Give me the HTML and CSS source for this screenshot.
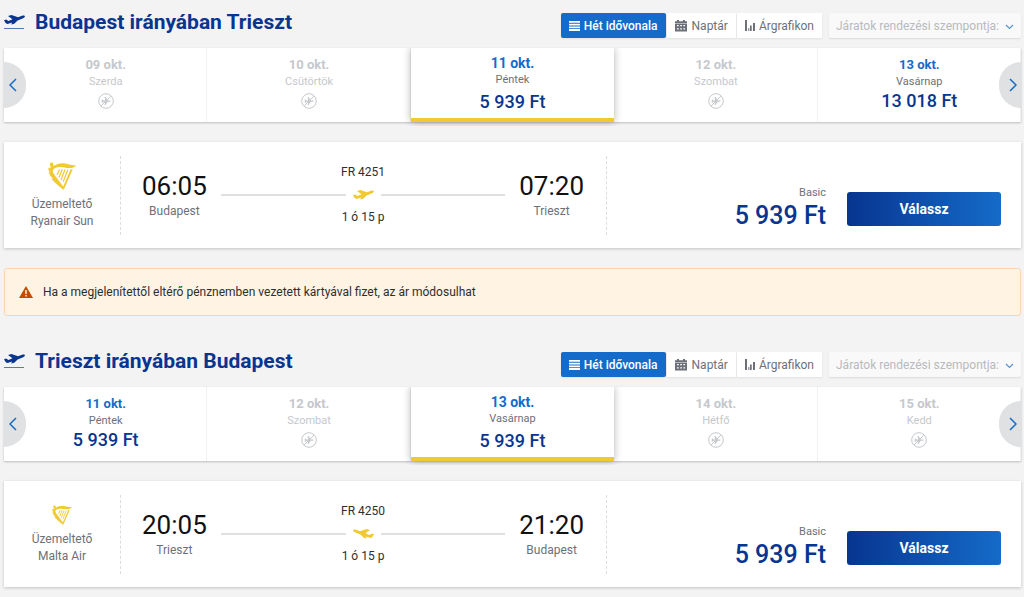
FILE: index.html
```
<!DOCTYPE html>
<html lang="hu">
<head>
  <meta charset="UTF-8">
  <meta name="viewport" content="width=device-width, initial-scale=1.0">
  <title>Járatválasztás</title>
  <link rel="stylesheet" href="styles.css">
</head>
<body>
  <!-- Shared icons -->
  <svg class="sprite" aria-hidden="true">
    <symbol id="plane" viewBox="0 0 21 10">
      <path d="M0 5.200 2 4.600l2.500 1.500 4-1.900L4 1l3.500-.9 6.500 2.200 4-1.600c1.400-.5 2.800-.3 2.900.5.1 1-1.100 1.700-2.300 2.200l-5 2.100-3.400 3.300-3 .7.900-2-3 1C3.500 9.100 2.300 9 1.600 8.100z"/>
    </symbol>
    <symbol id="no-flight" viewBox="0 0 16 16">
      <circle cx="8" cy="8" r="7.300" fill="none" stroke="currentColor"/>
      <path d="M3.200 12.800 12.800 3.200" stroke="currentColor"/>
      <path d="M3.500 6.500h1l1 1H7.300L6.500 4h1l2.200 3.500h2c1.200 0 1.200 1.200 0 1.200h-2L7.500 12h-1l.8-3.300H5.500l-1 1h-1L4 8z" fill="currentColor"/>
    </symbol>
    <symbol id="harp" viewBox="0 0 28 28">
      <path d="M2.200 1.200C3.300.2 5 .5 5.300 2c.2.900-.1 1.500-.5 2C9.500 2 12.500.6 17 1.400c4.300.8 6.800 2.300 11 1.500-1.600 2.600-5 3.600-9 3-4.700-.8-8.500-1.500-12.500.5-2.200 1.200-2 3.100-.7 5.300l9.700 13.200-.3 2.900C11.500 24 5 19.800 3.400 16.500l1.500.3C2.700 14.500 1 12.200.6 9.800l1.500.7C.8 8.600 0 7 .4 5.400l1.600 1C2.200 5.500 2.500 5 3 4.500 1.900 4 1.500 2.500 2.200 1.200z"/>
      <path d="M22.500 7.500 24.800 7 15.600 28l-.8-2.600z"/>
      <path d="M11.500 7.500 9 13M14.200 7.200 11 15.500M17 7.500l-4 10.500M19.800 7.800l-4.600 12" stroke="currentColor" stroke-width="1.200" fill="none"/>
    </symbol>
    <symbol id="chevron" viewBox="0 0 8 14">
      <path d="M7 1 1 7l6 6" fill="none" stroke="currentColor" stroke-width="1.500"/>
    </symbol>
    <symbol id="rows" viewBox="0 0 11 10">
      <path d="M0 0h11v1.800H0zM0 2.700h11v1.800H0zM0 5.400h11v1.800H0zM0 8.100h11v1.800H0z"/>
    </symbol>
    <symbol id="calendar" viewBox="0 0 12 12">
      <path fill-rule="evenodd" d="M2 0h2v1.200h4V0h2v1.200h2V3H0V1.200h2zM0 3.600h12V11.500H0zM2 5v1.200h1.700V5zm3.200 0v1.200h1.700V5zm3.200 0v1.200h1.700V5zM2 8.200v1.200h1.700V8.200zm3.200 0v1.200h1.700V8.200zm3.200 0v1.200h1.700V8.200z"/>
    </symbol>
    <symbol id="bars" viewBox="0 0 10 11">
      <path d="M0 0h2v11H0zM3.300 8h1v3h-1zM5 5.500h1.700V11H5zM8 3h2v8H8z"/>
    </symbol>
  </svg>

  <main class="flights">
    <section class="journey">
      <header class="journey-header">
        <h1>
          <svg class="takeoff" viewBox="0 0 21 15" aria-hidden="true"><use href="#plane" width="21" height="10"/><path d="M0 13.500h20" stroke="#5577b8"/></svg>
          Budapest irányában Trieszt
        </h1>
        <div class="tools">
          <div class="views">
            <button class="view selected"><svg class="icon-rows"><use href="#rows"/></svg>Hét idővonala</button>
            <button class="view"><svg class="icon-calendar"><use href="#calendar"/></svg>Naptár</button>
            <button class="view"><svg class="icon-bars"><use href="#bars"/></svg>Árgrafikon</button>
          </div>
          <div class="sort">
            <select disabled aria-label="Rendezés">
              <option>Járatok rendezési szempontja:</option>
            </select>
            <svg viewBox="0 0 9 6"><path d="M1 1l3.500 3.500L8 1" fill="none" stroke="currentColor" stroke-width="1.200"/></svg>
          </div>
        </div>
      </header>

      <div class="carousel">
        <button class="arrow prev" aria-label="Előző"><svg><use href="#chevron"/></svg></button>
        <button class="day" disabled>
          <span class="date">09 okt.</span>
          <span class="weekday">Szerda</span>
          <svg class="no-flight"><use href="#no-flight"/></svg>
        </button>
        <button class="day" disabled>
          <span class="date">10 okt.</span>
          <span class="weekday">Csütörtök</span>
          <svg class="no-flight"><use href="#no-flight"/></svg>
        </button>
        <button class="day active">
          <span class="date">11 okt.</span>
          <span class="weekday">Péntek</span>
          <span class="fare">5 939 Ft</span>
        </button>
        <button class="day" disabled>
          <span class="date">12 okt.</span>
          <span class="weekday">Szombat</span>
          <svg class="no-flight"><use href="#no-flight"/></svg>
        </button>
        <button class="day">
          <span class="date">13 okt.</span>
          <span class="weekday">Vasárnap</span>
          <span class="fare">13 018 Ft</span>
        </button>
        <button class="arrow next" aria-label="Következő"><svg><use href="#chevron"/></svg></button>
      </div>

      <article class="card">
        <div class="operator">
          <svg class="harp harp-large"><use href="#harp"/></svg>
          <span>Üzemeltető</span>
          <span>Ryanair Sun</span>
        </div>
        <div class="route">
          <div class="stop">
            <span class="time">06:05</span>
            <span class="city">Budapest</span>
          </div>
          <div class="leg">
            <span>FR 4251</span>
            <div class="track"><svg><use href="#plane"/></svg></div>
            <span>1 ó 15 p</span>
          </div>
          <div class="stop">
            <span class="time">07:20</span>
            <span class="city">Trieszt</span>
          </div>
        </div>
        <div class="offer">
          <div class="price">
            <span class="plan">Basic</span>
            <span class="amount">5 939 Ft</span>
          </div>
          <button class="select-button">Válassz</button>
        </div>
      </article>
    </section>

    <div class="notice">
      <svg viewBox="0 0 14 12" aria-hidden="true">
        <path d="M7 0 14 12H0z" fill="#c54b00"/>
        <path d="M7 4v4M7 9v1.500" stroke="#fff4e4" stroke-width="1.500"/>
      </svg>
      <p>Ha a megjelenítettől eltérő pénznemben vezetett kártyával fizet, az ár módosulhat</p>
    </div>

    <section class="journey">
      <header class="journey-header">
        <h1>
          <svg class="takeoff" viewBox="0 0 21 15" aria-hidden="true"><use href="#plane" width="21" height="10"/><path d="M0 13.500h20" stroke="#5577b8"/></svg>
          Trieszt irányában Budapest
        </h1>
        <div class="tools">
          <div class="views">
            <button class="view selected"><svg class="icon-rows"><use href="#rows"/></svg>Hét idővonala</button>
            <button class="view"><svg class="icon-calendar"><use href="#calendar"/></svg>Naptár</button>
            <button class="view"><svg class="icon-bars"><use href="#bars"/></svg>Árgrafikon</button>
          </div>
          <div class="sort">
            <select disabled aria-label="Rendezés">
              <option>Járatok rendezési szempontja:</option>
            </select>
            <svg viewBox="0 0 9 6"><path d="M1 1l3.500 3.500L8 1" fill="none" stroke="currentColor" stroke-width="1.200"/></svg>
          </div>
        </div>
      </header>

      <div class="carousel">
        <button class="arrow prev" aria-label="Előző"><svg><use href="#chevron"/></svg></button>
        <button class="day">
          <span class="date">11 okt.</span>
          <span class="weekday">Péntek</span>
          <span class="fare">5 939 Ft</span>
        </button>
        <button class="day" disabled>
          <span class="date">12 okt.</span>
          <span class="weekday">Szombat</span>
          <svg class="no-flight"><use href="#no-flight"/></svg>
        </button>
        <button class="day active">
          <span class="date">13 okt.</span>
          <span class="weekday">Vasárnap</span>
          <span class="fare">5 939 Ft</span>
        </button>
        <button class="day" disabled>
          <span class="date">14 okt.</span>
          <span class="weekday">Hétfő</span>
          <svg class="no-flight"><use href="#no-flight"/></svg>
        </button>
        <button class="day" disabled>
          <span class="date">15 okt.</span>
          <span class="weekday">Kedd</span>
          <svg class="no-flight"><use href="#no-flight"/></svg>
        </button>
        <button class="arrow next" aria-label="Következő"><svg><use href="#chevron"/></svg></button>
      </div>

      <article class="card">
        <div class="operator">
          <svg class="harp"><use href="#harp"/></svg>
          <span>Üzemeltető</span>
          <span>Malta Air</span>
        </div>
        <div class="route">
          <div class="stop">
            <span class="time">20:05</span>
            <span class="city">Trieszt</span>
          </div>
          <div class="leg">
            <span>FR 4250</span>
            <div class="track inbound"><svg><use href="#plane"/></svg></div>
            <span>1 ó 15 p</span>
          </div>
          <div class="stop">
            <span class="time">21:20</span>
            <span class="city">Budapest</span>
          </div>
        </div>
        <div class="offer">
          <div class="price">
            <span class="plan">Basic</span>
            <span class="amount">5 939 Ft</span>
          </div>
          <button class="select-button">Válassz</button>
        </div>
      </article>
    </section>
  </main>
</body>
</html>
```
FILE: styles.css
```
* {
  box-sizing: border-box;
}
body {
  margin: 0;
  font-family: Roboto, "Liberation Sans", sans-serif;
  font-size: 12px;
  color: #2e2e2e;
  background-color: #f3f3f3;
}
button,
select {
  font-family: inherit;
  font-size: 12px;
  border: none;
  margin: 0;
  cursor: pointer;
}
svg {
  fill: currentColor;
  flex-shrink: 0;
}
.sprite {
  display: none;
}
.flights {
  padding: 0 3px 10px 4px;
}

/* Title and view switch */
.journey-header {
  display: flex;
  justify-content: space-between;
  align-items: flex-start;
  padding: 8px 0 10px;
}
.journey-header h1 {
  display: flex;
  align-items: center;
  gap: 10px;
  margin: 0;
  font-size: 21px;
  line-height: 28px;
  font-weight: 700;
  color: #073590;
}
.takeoff {
  width: 21px;
  height: 15px;
}
.tools {
  display: flex;
  gap: 7px;
  padding-top: 5px;
}
.views {
  display: flex;
  gap: 1px;
}
.view {
  display: flex;
  align-items: center;
  gap: 4px;
  height: 25px;
  padding: 0 8px;
  color: #6e7079;
  background: #fff;
  box-shadow: 0 1px 2px rgba(0, 0, 0, 0.08);
}
.view.selected {
  font-weight: 500;
  color: #fff;
  background: #156bc9;
  border-radius: 2px;
}
.icon-rows {
  width: 11px;
  height: 10px;
}
.icon-calendar {
  width: 12px;
  height: 12px;
  margin-right: 1px;
}
.icon-bars {
  width: 10px;
  height: 11px;
}
.sort {
  position: relative;
  color: #156bc9;
}
.sort select {
  appearance: none;
  width: 192px;
  height: 25px;
  padding: 0 7px;
  color: #b8babd;
  opacity: 1;
  background: #f9f9f9;
  border-radius: 2px;
  box-shadow: 0 1px 2px rgba(0, 0, 0, 0.1);
}
.sort svg {
  position: absolute;
  right: 7px;
  top: 11px;
  width: 9px;
  height: 6px;
  opacity: 0.7;
}

/* Day carousel */
.carousel {
  position: relative;
  display: grid;
  grid-template-columns: repeat(5, 1fr);
  background: #fff;
  box-shadow: 0 1px 2px rgba(0, 0, 0, 0.22);
}
.day {
  display: flex;
  flex-direction: column;
  align-items: center;
  height: 74px;
  padding: 9px 0 0;
  color: #6e7079;
  background: #fff;
  box-shadow: inset -1px 0 #f1f1f1;
}
.day:disabled {
  color: #c5c8cc;
}
.date {
  font-size: 13px;
  line-height: 16px;
  font-weight: 700;
  color: #156bc9;
}
.weekday {
  font-size: 11px;
  line-height: 17px;
}
.fare {
  font-size: 18px;
  line-height: 22px;
  font-weight: 500;
  color: #073590;
}
.day:disabled .date {
  color: inherit;
}
.day.active {
  position: relative;
  padding-top: 7px;
  border-bottom: 4px solid #f1c933;
  box-shadow: 0 0 8px rgba(0, 0, 0, 0.3);
  clip-path: inset(0 -12px -4px);
}
.active .date {
  font-size: 14px;
}
.active .fare {
  line-height: 28px;
}
.no-flight {
  width: 16px;
  height: 16px;
  margin-top: 3px;
}
.arrow {
  position: absolute;
  top: 14px;
  z-index: 1;
  display: flex;
  align-items: center;
  justify-content: center;
  width: 22px;
  height: 46px;
  padding: 0;
  color: #156bc9;
  background: #e0e1e3;
}
.arrow svg {
  width: 8px;
  height: 14px;
}
.prev {
  left: 0;
  padding-right: 5px;
  border-radius: 0 23px 23px 0;
}
.next {
  right: 0;
  padding-left: 5px;
  border-radius: 23px 0 0 23px;
}
.next svg {
  transform: scaleX(-1);
}

/* Flight card */
.card {
  display: grid;
  grid-template-columns: 117fr 486fr 414fr;
  height: 106px;
  margin-top: 20px;
  padding: 14px 0 13px;
  background: #fff;
  box-shadow: 0 1px 3px rgba(0, 0, 0, 0.2);
}
.operator {
  display: flex;
  flex-direction: column;
  align-items: center;
  justify-content: center;
  line-height: 17px;
  color: #6e7079;
  border-right: 1px dashed #dcdcdc;
}
.harp {
  width: 20px;
  height: 20px;
  margin-bottom: 6px;
  color: #f1c933;
}
.harp-large {
  width: 28px;
  height: 28px;
}
.route {
  display: flex;
  align-items: center;
  gap: 14px;
  padding: 0 22px 2px 21px;
  border-right: 1px dashed #dcdcdc;
}
.stop {
  display: flex;
  flex-direction: column;
  align-items: center;
}
.time {
  font-size: 26px;
  line-height: 32px;
  color: #111;
}
.city {
  line-height: 18px;
  color: #6e7079;
}
.leg {
  flex: 1;
  display: flex;
  flex-direction: column;
  align-items: center;
  line-height: 18px;
}
.track {
  display: flex;
  align-items: center;
  gap: 7px;
  width: 100%;
  height: 27px;
  color: #f1c933;
}
.track::before,
.track::after {
  content: "";
  flex: 1;
  height: 2px;
  background: #e0e0e0;
}
.track svg {
  width: 21px;
  height: 10px;
}
.inbound svg {
  transform: scaleX(-1);
}
.offer {
  display: flex;
  align-items: flex-end;
  justify-content: flex-end;
  gap: 21px;
  padding: 0 20px 3px;
}
.price {
  display: flex;
  flex-direction: column;
  align-items: flex-end;
}
.plan {
  font-size: 11px;
  line-height: 14px;
  color: #6e7079;
}
.amount {
  font-size: 25px;
  line-height: 32px;
  font-weight: 500;
  color: #073590;
}
.select-button {
  width: 154px;
  height: 34px;
  margin-bottom: 6px;
  font-size: 14px;
  font-weight: 700;
  color: #fff;
  background: linear-gradient(90deg, #073590, #156bc9);
  border-radius: 3px;
}

/* Currency notice */
.notice {
  display: flex;
  align-items: center;
  gap: 10px;
  height: 48px;
  margin: 20px 0 23px;
  padding: 0 14px;
  background: #fff4e4;
  border: 1px solid #f5d5b5;
  border-radius: 3px;
}
.notice svg {
  width: 14px;
  height: 12px;
}
.notice p {
  margin: 0;
}
```
